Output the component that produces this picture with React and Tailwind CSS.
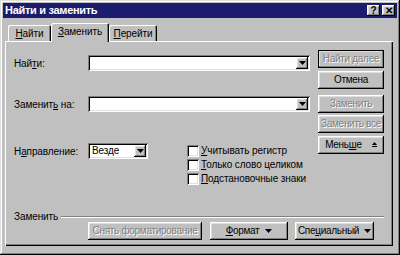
import React from 'react';

const raised = 'shadow-[inset_-1px_-1px_#000,inset_1px_1px_#fff,inset_-2px_-2px_#808080,inset_2px_2px_#dfdfdf]';
const sunken = 'shadow-[inset_1px_1px_#808080,inset_-1px_-1px_#fff,inset_2px_2px_#000,inset_-2px_-2px_#dfdfdf]';
const disabledText = 'text-[#808080] [text-shadow:1px_1px_0_#fff]';

function U({ children }) {
  return <span className="underline underline-offset-[1px]">{children}</span>;
}

function DownTriangle({ className = '' }) {
  return (
    <svg width="7" height="4" viewBox="0 0 7 4" className={className}>
      <polygon points="0,0 7,0 3.5,4" fill="#000" />
    </svg>
  );
}

function ArrowButton() {
  return (
    <div className={`w-[12px] h-[12px] bg-[#c0c0c0] flex items-center justify-center ${raised}`}>
      <DownTriangle />
    </div>
  );
}

function Combo({ width, text }) {
  return (
    <div className={`h-[16px] bg-white ${sunken} flex items-center pl-[4px] pr-[2px] ${width}`}>
      <span className="flex-1 leading-none">{text}</span>
      <ArrowButton />
    </div>
  );
}

function Button({ children, disabled, isDefault, className = '' }) {
  return (
    <div
      className={`h-[18px] bg-[#c0c0c0] flex items-center justify-center leading-none tracking-[-0.3px] ${raised} ${
        isDefault ? 'outline outline-1 outline-black -outline-offset-1' : ''
      } ${disabled ? disabledText : 'text-black'} ${className}`}
    >
      {children}
    </div>
  );
}

function Checkbox({ children }) {
  return (
    <div className="h-[14px] flex items-center">
      <div className={`w-[12px] h-[12px] bg-white ${sunken}`} />
      <span className="ml-[2px] leading-none">{children}</span>
    </div>
  );
}

function Tab({ children, active, width }) {
  return (
    <div
      className={`${width} flex items-center justify-center rounded-t-[2px] bg-[#c0c0c0] shadow-[inset_1px_1px_#fff,inset_-1px_0_#000,inset_-2px_0_#808080] ${
        active ? 'h-[19px] relative z-10 -mb-px pb-[2px]' : 'h-[16px]'
      }`}
    >
      {children}
    </div>
  );
}

function TitleButton({ children }) {
  return (
    <div className={`w-[13px] h-[11px] bg-[#c0c0c0] flex items-center justify-center text-[10px] font-bold leading-none text-black ${raised}`}>
      {children}
    </div>
  );
}

export default function App() {
  return (
    <div
      className="w-[400px] h-[255px] bg-[#c0c0c0] p-[3px] flex flex-col text-[10px] tracking-[-0.1px] whitespace-nowrap text-black shadow-[inset_-1px_-1px_#000,inset_1px_1px_#dfdfdf,inset_-2px_-2px_#808080,inset_2px_2px_#fff]"
      style={{ fontFamily: '"Liberation Sans", Arial, sans-serif' }}
    >
      <div className="h-[15px] bg-[#1c1c6e] flex items-center pl-[2px] pr-[2px]">
        <span className="flex-1 text-white font-bold text-[11px] tracking-[-0.3px] leading-none">Найти и заменить</span>
        <div className="flex gap-[2px]">
          <TitleButton>?</TitleButton>
          <TitleButton>✕</TitleButton>
        </div>
      </div>

      <div className="flex-1 flex flex-col pl-[2px] pr-[4px] pt-[5px] pb-[6px]">
        <div className="flex items-end h-[18px] pl-[3px]">
          <Tab width="w-[43px]"><U>Н</U>айти</Tab>
          <Tab width="w-[58px]" active><U>З</U>аменить</Tab>
          <Tab width="w-[48px]"><U>П</U>ерейти</Tab>
        </div>

        <div className="flex-1 flex flex-col pt-[9px] px-[9px] pb-[6px] shadow-[inset_1px_1px_#fff,inset_-1px_-1px_#000,inset_-2px_-2px_#808080]">
          <div className="flex">
            <div className="w-[296px] flex flex-col">
              <div className="mt-[5px] h-[16px] flex items-center">
                <span className="w-[74px]">Най<U>т</U>и:</span>
                <Combo width="w-[222px]" text="" />
              </div>
              <div className="mt-[25px] h-[16px] flex items-center">
                <span className="w-[74px]">Заменит<U>ь</U> на:</span>
                <Combo width="w-[222px]" text="" />
              </div>
              <div className="mt-[31px] flex items-start">
                <span className="w-[74px] h-[16px] flex items-center">Н<U>а</U>правление:</span>
                <Combo width="w-[60px]" text="Везде" />
                <div className="ml-[39px] mt-[1px] flex flex-col">
                  <Checkbox><U>У</U>читывать регистр</Checkbox>
                  <Checkbox><U>Т</U>олько слово целиком</Checkbox>
                  <Checkbox><U>П</U>одстановочные знаки</Checkbox>
                </div>
              </div>
            </div>
            <div className="ml-[8px] w-[67px] flex flex-col">
              <Button disabled isDefault>Найти далее</Button>
              <Button className="mt-[3px]">Отмена</Button>
              <Button disabled className="mt-[6px]">Заменить</Button>
              <Button disabled className="mt-[2px]">Заменить все</Button>
              <Button className="mt-[3px] gap-[10px]">
                <span>Мень<U>ш</U>е</span>
                <svg width="5" height="6" viewBox="0 0 5 6">
                  <polygon points="2.5,0 5,3 0,3" fill="#000" />
                  <rect x="0" y="4" width="5" height="1" fill="#000" />
                </svg>
              </Button>
            </div>
          </div>

          <div className="mt-auto">
            <div className="h-[10px] flex items-center">
              <span className="leading-none">Заменить</span>
              <div className="flex-1 ml-[3px] h-[2px] border-t border-t-[#808080] border-b border-b-white" />
            </div>
            <div className="flex pl-[74px]">
              <Button disabled className="w-[114px]">Снять форматирование</Button>
              <Button className="ml-[8px] w-[78px] gap-[6px]">
                <span><U>Ф</U>ормат</span>
                <DownTriangle />
              </Button>
              <Button className="ml-[7px] w-[79px] gap-[5px]">
                <span>Спе<U>ц</U>иальный</span>
                <DownTriangle />
              </Button>
            </div>
          </div>
        </div>
      </div>
    </div>
  );
}
